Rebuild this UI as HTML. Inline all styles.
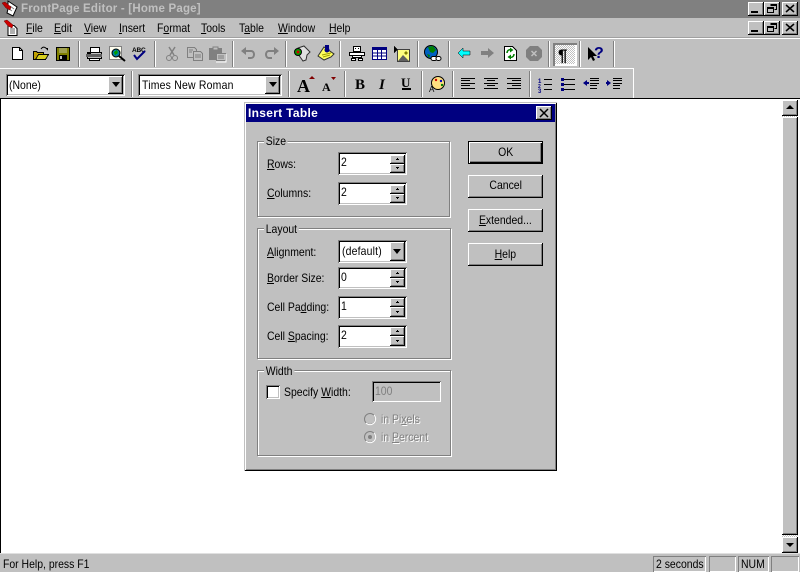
<!DOCTYPE html>
<html><head><meta charset="utf-8"><title>FrontPage Editor</title>
<style>
html,body{margin:0;padding:0;width:800px;height:572px;overflow:hidden;background:#c0c0c0}
body{position:relative;font:12px/14px "Liberation Sans",sans-serif;color:#000}
div{position:absolute;box-sizing:border-box}
.t{white-space:nowrap;height:14px;transform:scaleX(.87);transform-origin:0 0}
.g{color:#808080;text-shadow:1px 1px 0 #fff}
.btn{background:#c0c0c0;box-shadow:inset -1px -1px 0 #000,inset 1px 1px 0 #fff,inset -2px -2px 0 #808080}
.sunk{background:#fff;box-shadow:inset 1px 1px 0 #808080,inset -1px -1px 0 #fff,inset 2px 2px 0 #000,inset -2px -2px 0 #c0c0c0}
.grp{border:1px solid #808080;box-shadow:1px 1px 0 #fff,inset 1px 1px 0 #fff}
.leg{background:#c0c0c0;padding:0 2px 0 2px;height:14px;white-space:nowrap}
.pb{text-align:center;line-height:22px}
.pb span{display:inline-block;transform:scaleX(.87)}
.panel{box-shadow:inset 1px 1px 0 #808080,inset -1px -1px 0 #fff;padding-left:3px;line-height:16px;white-space:nowrap;overflow:hidden}
.panel span{display:inline-block;transform:scaleX(.87);transform-origin:0 0}
svg{position:absolute;left:0;top:0}
</style></head><body>

<!-- title bar -->
<div style="left:0;top:0;width:800px;height:18px;background:#808080"></div>
<div class="t" style="left:21px;top:2px;font-weight:bold;font-size:11.5px;color:#c0c0c0;letter-spacing:.2px;transform:none">FrontPage Editor - [Home Page]</div>
<!-- menu -->
<div class="t" style="left:26px;top:21px"><u>F</u>ile</div>
<div class="t" style="left:54px;top:21px"><u>E</u>dit</div>
<div class="t" style="left:84px;top:21px"><u>V</u>iew</div>
<div class="t" style="left:119px;top:21px"><u>I</u>nsert</div>
<div class="t" style="left:157px;top:21px">F<u>o</u>rmat</div>
<div class="t" style="left:201px;top:21px"><u>T</u>ools</div>
<div class="t" style="left:239px;top:21px">T<u>a</u>ble</div>
<div class="t" style="left:278px;top:21px"><u>W</u>indow</div>
<div class="t" style="left:329px;top:21px"><u>H</u>elp</div>
<div style="left:0;top:38px;width:800px;height:1px;background:#fff"></div>
<div style="left:0;top:37px;width:800px;height:1px;background:#a0a0a0"></div>
<div style="left:0;top:68px;width:633px;height:1px;background:#fff"></div>
<div style="left:633px;top:68px;width:1px;height:30px;background:#fff"></div>

<!-- toolbar selects -->
<div class="sunk" style="left:6px;top:74px;width:119px;height:22px"></div>
<div class="t" style="left:9px;top:78px">(None)</div>
<div class="btn" style="left:108px;top:76px;width:15px;height:18px"></div>
<div class="sunk" style="left:138px;top:74px;width:144px;height:22px"></div>
<div class="t" style="left:142px;top:78px;letter-spacing:.25px">Times New Roman</div>
<div class="btn" style="left:265px;top:76px;width:15px;height:18px"></div>

<!-- pressed button -->
<div style="left:553px;top:43px;width:24px;height:23px;box-shadow:inset 2px 2px 0 #808080,inset -2px -2px 0 #fff;background-color:#fff;background-image:conic-gradient(#fff 25%,#c0c0c0 0 50%,#fff 0 75%,#c0c0c0 0);background-size:2px 2px;background-clip:content-box;padding:2px"></div>

<!-- doc area -->
<div style="left:0;top:98px;width:800px;height:1px;background:#000"></div>
<div style="left:0;top:99px;width:800px;height:455px;background:#fff;border-left:1px solid #000"></div>
<div style="left:0;top:553px;width:800px;height:1px;background:#e0e0e0"></div>
<!-- scrollbar -->
<div style="left:782px;top:100px;width:16px;height:453px;background-image:conic-gradient(#fff 25%,#c0c0c0 0 50%,#fff 0 75%,#c0c0c0 0);background-size:2px 2px"></div>
<div class="btn" style="left:782px;top:100px;width:16px;height:16px"></div>
<div class="btn" style="left:782px;top:117px;width:16px;height:418px"></div>
<div class="btn" style="left:782px;top:537px;width:16px;height:16px"></div>

<!-- window buttons -->
<div class="btn" style="left:748px;top:2px;width:16px;height:14px"></div>
<div class="btn" style="left:764px;top:2px;width:16px;height:14px"></div>
<div class="btn" style="left:782px;top:2px;width:16px;height:14px"></div>
<div class="btn" style="left:748px;top:21px;width:16px;height:14px"></div>
<div class="btn" style="left:764px;top:21px;width:16px;height:14px"></div>
<div class="btn" style="left:782px;top:21px;width:16px;height:14px"></div>

<!-- status -->
<div class="t" style="left:3px;top:557px">For Help, press F1</div>
<div class="panel" style="left:653px;top:556px;width:53px;height:16px"><span>2 seconds</span></div>
<div class="panel" style="left:709px;top:556px;width:27px;height:16px"></div>
<div class="panel" style="left:738px;top:556px;width:31px;height:16px"><span>NUM</span></div>
<div class="panel" style="left:771px;top:556px;width:28px;height:16px"></div>

<!-- dialog -->
<div style="left:244px;top:102px;width:313px;height:369px;background:#c0c0c0;box-shadow:inset 1px 1px 0 #c0c0c0,inset -1px -1px 0 #000,inset 2px 2px 0 #fff,inset -2px -2px 0 #808080"></div>
<div style="left:246px;top:104px;width:309px;height:18px;background:#000080"></div>
<div class="t" style="left:248px;top:106px;font-weight:bold;color:#fff;letter-spacing:.3px;transform:none">Insert Table</div>
<div class="btn" style="left:536px;top:106px;width:16px;height:14px"></div>

<div class="grp" style="left:257px;top:141px;width:193px;height:76px"></div>
<div class="t leg" style="left:264px;top:134px">Size</div>
<div class="grp" style="left:257px;top:228px;width:194px;height:131px"></div>
<div class="t leg" style="left:264px;top:222px">Layout</div>
<div class="grp" style="left:257px;top:370px;width:194px;height:86px"></div>
<div class="t leg" style="left:264px;top:364px">Width</div>

<div class="t" style="left:267px;top:157px"><u>R</u>ows:</div>
<div class="t" style="left:267px;top:186px"><u>C</u>olumns:</div>
<div class="t" style="left:267px;top:245px"><u>A</u>lignment:</div>
<div class="t" style="left:267px;top:271px"><u>B</u>order Size:</div>
<div class="t" style="left:267px;top:300px">Cell Pa<u>d</u>ding:</div>
<div class="t" style="left:267px;top:329px">Cell <u>S</u>pacing:</div>

<!-- fields -->
<div class="sunk" style="left:338px;top:152px;width:69px;height:23px"></div>
<div class="sunk" style="left:338px;top:182px;width:69px;height:23px"></div>
<div class="sunk" style="left:338px;top:240px;width:69px;height:23px"></div>
<div class="sunk" style="left:338px;top:267px;width:69px;height:22px"></div>
<div class="sunk" style="left:338px;top:296px;width:69px;height:23px"></div>
<div class="sunk" style="left:338px;top:325px;width:69px;height:23px"></div>
<div class="t" style="left:341px;top:155px">2</div>
<div class="t" style="left:341px;top:185px">2</div>
<div class="t" style="left:342px;top:244px;letter-spacing:.2px">(default)</div>
<div class="t" style="left:341px;top:270px">0</div>
<div class="t" style="left:341px;top:299px">1</div>
<div class="t" style="left:341px;top:328px">2</div>

<div class="btn" style="left:390px;top:155px;width:15px;height:9px"></div>
<div class="btn" style="left:390px;top:164px;width:15px;height:9px"></div>
<div class="btn" style="left:390px;top:185px;width:15px;height:9px"></div>
<div class="btn" style="left:390px;top:194px;width:15px;height:9px"></div>
<div class="btn" style="left:390px;top:242px;width:15px;height:19px"></div>
<div class="btn" style="left:390px;top:269px;width:15px;height:9px"></div>
<div class="btn" style="left:390px;top:278px;width:15px;height:9px"></div>
<div class="btn" style="left:390px;top:298px;width:15px;height:9px"></div>
<div class="btn" style="left:390px;top:307px;width:15px;height:10px"></div>
<div class="btn" style="left:390px;top:327px;width:15px;height:9px"></div>
<div class="btn" style="left:390px;top:336px;width:15px;height:10px"></div>

<!-- buttons -->
<div class="btn pb" style="left:468px;top:141px;width:75px;height:23px;line-height:22px;box-shadow:inset 0 0 0 1px #000,inset 2px 2px 0 #fff,inset -2px -2px 0 #000,inset -3px -3px 0 #808080"><span>OK</span></div>
<div class="btn pb" style="left:468px;top:175px;width:75px;height:23px;line-height:21px"><span>Cancel</span></div>
<div class="btn pb" style="left:468px;top:209px;width:75px;height:23px"><span><u>E</u>xtended...</span></div>
<div class="btn pb" style="left:468px;top:243px;width:75px;height:23px"><span><u>H</u>elp</span></div>

<!-- width group -->
<div class="sunk" style="left:266px;top:385px;width:14px;height:14px"></div>
<div class="t" style="left:284px;top:385px">Specify <u>W</u>idth:</div>
<div class="sunk" style="left:372px;top:381px;width:69px;height:21px;background:#c0c0c0"></div>
<div class="t" style="left:375px;top:384px;color:#808080">100</div>
<div class="t g" style="left:381px;top:412px">in Pi<u>x</u>els</div>
<div class="t g" style="left:381px;top:430px">in <u>P</u>ercent</div>

<!-- vector overlay -->
<svg width="800" height="572" viewBox="0 0 800 572" shape-rendering="crispEdges">
<!-- separators -->
<g fill="#808080">
<rect x="78" y="41" width="1" height="26"/><rect x="154" y="41" width="1" height="26"/><rect x="232" y="41" width="1" height="26"/><rect x="285" y="41" width="1" height="26"/><rect x="339" y="41" width="1" height="26"/><rect x="417" y="41" width="1" height="26"/><rect x="448" y="41" width="1" height="26"/><rect x="548" y="41" width="1" height="26"/><rect x="579" y="41" width="1" height="26"/><rect x="613" y="41" width="1" height="26"/>
<rect x="131" y="71" width="1" height="26"/><rect x="288" y="71" width="1" height="26"/><rect x="344" y="71" width="1" height="26"/><rect x="421" y="71" width="1" height="26"/><rect x="452" y="71" width="1" height="26"/><rect x="529" y="71" width="1" height="26"/></g>
<g fill="#fff">
<rect x="79" y="41" width="1" height="26"/><rect x="155" y="41" width="1" height="26"/><rect x="233" y="41" width="1" height="26"/><rect x="286" y="41" width="1" height="26"/><rect x="340" y="41" width="1" height="26"/><rect x="418" y="41" width="1" height="26"/><rect x="449" y="41" width="1" height="26"/><rect x="549" y="41" width="1" height="26"/><rect x="580" y="41" width="1" height="26"/><rect x="614" y="41" width="1" height="26"/>
<rect x="132" y="71" width="1" height="26"/><rect x="289" y="71" width="1" height="26"/><rect x="345" y="71" width="1" height="26"/><rect x="422" y="71" width="1" height="26"/><rect x="453" y="71" width="1" height="26"/><rect x="530" y="71" width="1" height="26"/></g>

<!-- app icons -->
<g shape-rendering="auto">
<path d="M8 1l9 6-4 9-6-3 1-4z" fill="#fff" stroke="#000"/><path d="M10 6l4 3M9 9l3 2" stroke="#808080"/>
<path d="M2 3l3-1 6 5-1 3-4-2z" fill="#c00000" stroke="#600" stroke-width=".5"/>
<path d="M8 25.500h6l3 3v7H8z" fill="#fff" stroke="#000"/><path d="M10 29h5M10 31h5M10 33h5" stroke="#606060"/>
<path d="M4 21l3-1 6 5-1 3-4-2z" fill="#d00000" stroke="#600" stroke-width=".5"/>
</g>

<!-- window glyphs -->
<g fill="#000"><rect x="751" y="11" width="7" height="2"/><rect x="751" y="30" width="7" height="2"/></g>
<g fill="none" stroke="#000"><path d="M770.500 4.500h6v5h-2M767.500 7.500h6v5h-6zM767.500 8.500h6M770.500 5.500h6"/></g>
<g fill="none" stroke="#000"><path d="M770.500 23.500h6v5h-2M767.500 26.500h6v5h-6zM767.500 27.500h6M770.500 24.500h6"/></g>
<g stroke="#000" stroke-width="1.500" shape-rendering="auto">
<path d="M786 5l8 7M794 5l-8 7M786 24l8 7M794 24l-8 7M540 109l8 8M548 109l-8 8"/></g>

<!-- arrows -->
<g fill="#000">
<path d="M790 105l4 4h-8z" shape-rendering="auto"/><path d="M786 543h8l-4 4z" shape-rendering="auto"/>
<path d="M112 82h8l-4 5z" shape-rendering="auto"/><path d="M269 82h8l-4 5z" shape-rendering="auto"/><path d="M393 249h8l-4 5z" shape-rendering="auto"/>
</g>
<g fill="#000">
<rect x="397" y="158" width="1" height="1"/><rect x="396" y="159" width="3" height="1"/><rect x="396" y="167" width="3" height="1"/><rect x="397" y="168" width="1" height="1"/>
<rect x="397" y="188" width="1" height="1"/><rect x="396" y="189" width="3" height="1"/><rect x="396" y="197" width="3" height="1"/><rect x="397" y="198" width="1" height="1"/>
<rect x="397" y="272" width="1" height="1"/><rect x="396" y="273" width="3" height="1"/><rect x="396" y="281" width="3" height="1"/><rect x="397" y="282" width="1" height="1"/>
<rect x="397" y="301" width="1" height="1"/><rect x="396" y="302" width="3" height="1"/><rect x="396" y="311" width="3" height="1"/><rect x="397" y="312" width="1" height="1"/>
<rect x="397" y="330" width="1" height="1"/><rect x="396" y="331" width="3" height="1"/><rect x="396" y="340" width="3" height="1"/><rect x="397" y="341" width="1" height="1"/>
</g>

<!-- radios -->
<g shape-rendering="auto">
<circle cx="370" cy="419" r="5.500" fill="#c0c0c0" stroke="#808080"/><path d="M374 415a5.500 5.500 0 0 1-8 8" fill="none" stroke="#fff"/>
<circle cx="370" cy="437" r="5.500" fill="#c0c0c0" stroke="#808080"/><path d="M374 433a5.500 5.500 0 0 1-8 8" fill="none" stroke="#fff"/>
<circle cx="370" cy="437" r="2" fill="#808080"/>
</g>

<!-- new -->
<path d="M12.500 47.500h7l3 3v9h-10z" fill="#fff" stroke="#000"/><path d="M19.500 47.500v3h3" fill="none" stroke="#000"/>
<!-- open -->
<path d="M33.500 51.500h3l1 1h6v7h-10z" fill="#c0a000" stroke="#000"/><path d="M35.500 59.500l3-5h10l-3 5z" fill="#d8d020" stroke="#000"/><path d="M41 49c2-3 4-2 6 0" fill="none" stroke="#000" shape-rendering="auto"/><path d="M45 48h3v3z"/>
<!-- save -->
<rect x="56.500" y="47.500" width="13" height="13" fill="#808000" stroke="#000"/><rect x="59" y="48" width="8" height="5" fill="#a0a050"/><rect x="59" y="55" width="8" height="5" fill="#000"/><rect x="60" y="56" width="2" height="3" fill="#c0c0c0"/>
<!-- print -->
<rect x="90.500" y="47.500" width="9" height="5" fill="#fff" stroke="#000"/><path d="M87.500 52.500h14v6h-14z" fill="#c0c0c0" stroke="#000"/><rect x="86" y="54" width="16" height="3" fill="#606060"/><rect x="89.500" y="58.500" width="10" height="2" fill="#fff" stroke="#000"/><rect x="87" y="52" width="4" height="2" fill="#000"/>
<!-- preview -->
<rect x="109.500" y="46.500" width="12" height="13" fill="#fffff0" stroke="#808080"/><circle cx="116" cy="53" r="4" fill="#0080a0" stroke="#000" shape-rendering="auto"/><path d="M114 52l3-2 1 3-3 2z" fill="#00a000"/><path d="M119 56l6 5" stroke="#000" stroke-width="2" shape-rendering="auto"/>
<!-- spell -->
<text x="132" y="52" font-family="Liberation Sans" font-size="6.500" font-weight="bold" fill="#000" letter-spacing="-.2">ABC</text>
<path d="M134 55l3 4 8-8" fill="none" stroke="#000080" stroke-width="2" shape-rendering="auto"/>
<!-- cut -->
<g fill="none" stroke="#808080" shape-rendering="auto"><path d="M169 47l5 8M175 47l-5 8" stroke-width="1.500"/><circle cx="169" cy="58" r="2.500"/><circle cx="175" cy="58" r="2.500"/></g>
<!-- copy -->
<path d="M187.500 47.500h7l2 2v8h-9z" fill="#c0c0c0" stroke="#808080"/><path d="M193.500 51.500h7l2 2v7h-9z" fill="#c0c0c0" stroke="#808080"/><path d="M195 55h6M195 57h6M189 50h4M189 52h3" stroke="#808080"/>
<!-- paste -->
<rect x="209.500" y="48.500" width="12" height="11" fill="#808080" stroke="#808080"/><rect x="213" y="47" width="5" height="3" fill="#c0c0c0" stroke="#808080"/><rect x="216.500" y="53.500" width="9" height="7" fill="#c0c0c0" stroke="#808080"/><path d="M218 56h6M218 58h6" stroke="#808080"/><path d="M226 54v8h-10" fill="none" stroke="#fff"/>
<!-- undo / redo -->
<g fill="none" stroke="#808080" stroke-width="2" shape-rendering="auto"><path d="M244 51h7c4 0 4 7 0 7h-3"/><path d="M276 51h-7c-4 0-4 7 0 7h3"/></g>
<path d="M246 47v8l-5-4z" fill="#808080" shape-rendering="auto"/><path d="M274 47v8l5-4z" fill="#808080" shape-rendering="auto"/>
<!-- hyperlink / bookmark icons -->
<g shape-rendering="auto"><path d="M298 48l6-2 6 6-3 3-1 5-3 1-5-7z" fill="#e0e0e0" stroke="#303030"/><circle cx="298" cy="52" r="3.500" fill="#00a000" stroke="#000"/><circle cx="298" cy="52" r="1.500" fill="#d00000"/>
<path d="M318 56l6-9 10 7-3 3-7 3z" fill="#ffff60" stroke="#303030"/><circle cx="327" cy="50" r="2.500" fill="#000080"/><rect x="325" y="45" width="4" height="4" fill="#000080"/><path d="M322 55l9-2M323 57l7-2" stroke="#a0a000"/></g>
<!-- robot -->
<g fill="#fff" stroke="#000"><rect x="353.500" y="46.500" width="7" height="5"/><rect x="349.500" y="52.500" width="15" height="3"/><rect x="352.500" y="55.500" width="9" height="2"/><rect x="351.500" y="58.500" width="4" height="2"/><rect x="358.500" y="58.500" width="4" height="2"/></g>
<rect x="355" y="48" width="1" height="1" fill="#000"/><rect x="358" y="48" width="1" height="1" fill="#000"/>
<!-- table -->
<rect x="372.500" y="47.500" width="14" height="12" fill="#fff" stroke="#000080"/><rect x="373" y="47" width="14" height="3" fill="#000080"/>
<path d="M373 53h13M373 56h13M377.500 50v9M381.500 50v9" stroke="#000080"/>
<!-- image -->
<rect x="397.500" y="49.500" width="12" height="12" fill="#ffff80" stroke="#404040"/><path d="M394 46v7l4-3.500z" fill="#000"/><path d="M398 61l5-6 6 6z" fill="#606060" shape-rendering="auto"/><circle cx="406" cy="53" r="1.500" fill="#808000"/>
<!-- globe -->
<g shape-rendering="auto"><circle cx="431" cy="52" r="6.500" fill="#0060c0" stroke="#000"/><path d="M428 47l5-1 3 4-3 3-3-1zM427 54l3 1-1 3z" fill="#008000"/><rect x="431" y="56.500" width="6" height="4" rx="2" fill="#fff" stroke="#000"/><rect x="436" y="56.500" width="5" height="4" rx="2" fill="#fff" stroke="#000"/></g>
<!-- arrows nav -->
<path d="M458 53l5-5v3h7v4h-7v3z" fill="#00ffff" stroke="#000" stroke-width=".5" shape-rendering="auto"/>
<path d="M494 53l-6-5v3h-7v4h7v3z" fill="#808080" shape-rendering="auto"/>
<!-- refresh -->
<path d="M504.500 46.500h8l4 4v10h-12z" fill="#fff" stroke="#000"/><g shape-rendering="auto"><path d="M507 53c0-3 3-4 5-3" fill="none" stroke="#008000" stroke-width="1.500"/><path d="M510 47.500l3.500 2.500-3.500 2.500z" fill="#008000"/><path d="M514 54c0 3-3 4-5 3" fill="none" stroke="#008000" stroke-width="1.500"/><path d="M511 54.500l-3.500 2.500 3.500 2.500z" fill="#008000"/></g>
<!-- stop -->
<path d="M530 46h8l4 4v7l-4 4h-8l-4-4v-7z" fill="#808080" shape-rendering="auto"/><path d="M531.500 51l5 5M536.500 51l-5 5" stroke="#c0c0c0" stroke-width="1.500" shape-rendering="auto"/>
<!-- pilcrow -->
<text x="558" y="61" font-family="Liberation Sans" font-size="17" font-weight="bold" fill="#000">¶</text>
<!-- help -->
<path d="M588 47v13l3-3 2 4 2-1-2-4h4z" fill="#000" shape-rendering="auto"/>
<text x="594" y="58" font-family="Liberation Sans" font-size="16" font-weight="bold" fill="#000080">?</text>

<!-- font size -->
<text x="297" y="92" font-family="Liberation Serif" font-size="18" font-weight="bold" fill="#000">A</text>
<path d="M309 79l3-3 3 3z" fill="#800000" shape-rendering="auto"/>
<text x="322" y="91" font-family="Liberation Serif" font-size="12" font-weight="bold" fill="#000">A</text>
<path d="M331 77h5l-2.500 3z" fill="#800000" shape-rendering="auto"/>
<!-- B I U -->
<text x="355" y="89" font-family="Liberation Serif" font-size="15" font-weight="bold" fill="#000">B</text>
<text x="379" y="89" font-family="Liberation Serif" font-size="15" font-weight="bold" font-style="italic" fill="#000">I</text>
<text x="401" y="87" font-family="Liberation Serif" font-size="13" font-weight="bold" fill="#000">U</text>
<rect x="402" y="88" width="9" height="2" fill="#000"/>
<!-- color -->
<g shape-rendering="auto"><circle cx="438" cy="83" r="6.500" fill="#ffe080" stroke="#000"/><circle cx="436" cy="80" r="1.200" fill="#d00000"/><circle cx="441" cy="81" r="1.200" fill="#0000c0"/><circle cx="442" cy="85" r="1.200" fill="#008000"/></g>
<text x="429" y="92" font-family="Liberation Sans" font-size="8" fill="#000">A</text>
<!-- align -->
<path d="M461 78.500h14M461 80.500h9M461 83.500h14M461 85.500h9M461 88.500h14M484 78.500h14M487 80.500h8M484 83.500h14M487 85.500h8M484 88.500h14M507 78.500h14M512 80.500h9M507 83.500h14M512 85.500h9M507 88.500h14" stroke="#000" fill="none"/>
<!-- lists -->
<text x="538" y="83" font-family="Liberation Sans" font-size="6" font-weight="bold" fill="#000080">1</text>
<text x="538" y="88" font-family="Liberation Sans" font-size="5" font-weight="bold" fill="#000080">2</text>
<text x="538" y="93" font-family="Liberation Sans" font-size="6" font-weight="bold" fill="#000080">3</text>
<path d="M544 79.500h8M544 84.500h8M544 89.500h8M564 79.500h11M564 84.500h11M564 89.500h11" stroke="#000"/>
<g fill="#000080"><rect x="561" y="78" width="3" height="3"/><rect x="561" y="83" width="3" height="3"/><rect x="561" y="88" width="3" height="3"/></g>
<path d="M590 78.500h9M590 80.500h9M590 83.500h9M590 85.500h7M590 88.500h7M613 78.500h9M613 80.500h9M613 83.500h9M613 85.500h7M613 88.500h7" stroke="#000"/>
<path d="M583 83l4-3v6z" fill="#000080" shape-rendering="auto"/><rect x="586" y="82" width="3" height="2" fill="#000080"/>
<path d="M611 83l-4-3v6z" fill="#000080" shape-rendering="auto"/><rect x="606" y="82" width="3" height="2" fill="#000080"/>
</svg>
</body></html>
